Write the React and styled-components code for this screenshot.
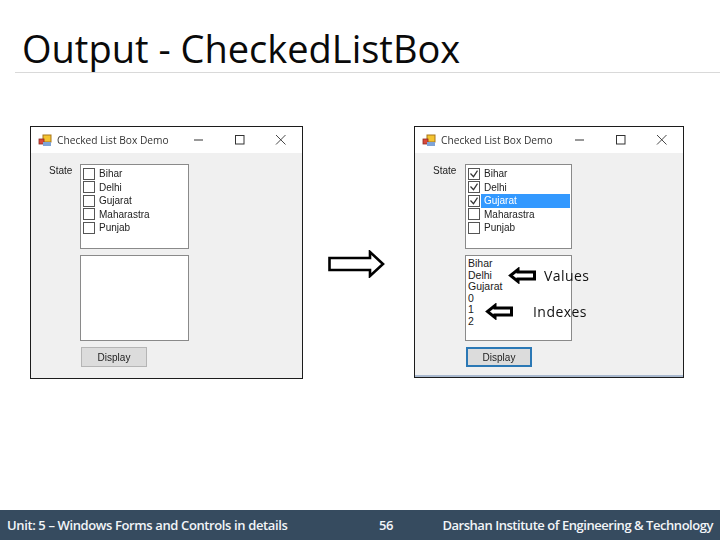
import React from "react";
import styled, { createGlobalStyle } from "styled-components";

const Global = createGlobalStyle`
  html, body { margin: 0; padding: 0; background: #fff; }
  #root { width: 720px; height: 540px; }
`;

const Slide = styled.div`
  width: 720px;
  height: 540px;
  display: flex;
  flex-direction: column;
  overflow: hidden;
  background: #fff;
  font-family: "Open Sans", "Liberation Sans", sans-serif;
`;

const Header = styled.header`
  height: 73px;
  flex: none;
  margin-left: 15px;
  box-sizing: border-box;
  border-bottom: 1px solid #d9d9d9;
  padding: 23px 0 0 7px;
`;

const Title = styled.h1`
  margin: 0;
  font-weight: 400;
  font-size: 38px;
  line-height: 50px;
  color: #0a0a0a;
  white-space: nowrap;
`;

const Stage = styled.main`
  flex: 1;
  display: flex;
  align-items: flex-start;
  padding: 53px 0 0 30px;
`;

const Window = styled.section`
  box-sizing: border-box;
  width: ${(p) => p.$width}px;
  height: ${(p) => p.$height}px;
  border: 1px solid #1c1c1c;
  background: #f0f0f0;
  box-shadow: ${(p) => (p.$accent ? "inset 0 -2px 0 #a9b9cf" : "none")};
  display: flex;
  flex-direction: column;
  flex: none;
`;

const TitleBar = styled.div`
  height: 26px;
  flex: none;
  background: #fff;
  display: flex;
  align-items: center;
  padding: 0 1px 0 7px;
  gap: 5px;
  font-size: 10.2px;
  color: #333;
`;

const TitleText = styled.span`
  flex: 1;
  white-space: nowrap;
  filter: blur(0.25px);
`;

const Controls = styled.div`
  display: flex;
  align-items: center;
  color: #333;
`;

const ControlSlot = styled.span`
  width: 41px;
  display: flex;
  justify-content: center;
`;

const Body = styled.div`
  display: grid;
  grid-template-columns: ${(p) => p.$label}px ${(p) => p.$list}px;
  grid-auto-rows: min-content;
  row-gap: 6px;
  padding-top: 11px;
  font-family: "Liberation Sans", Arial, sans-serif;
  font-size: 10px;
  color: #222;
  filter: blur(0.25px);
`;

const StateLabel = styled.div`
  padding: 1px 0 0 18px;
  font-size: 10px;
`;

const ListBox = styled.div`
  position: relative;
  grid-column: 2;
  box-sizing: border-box;
  height: ${(p) => p.$height}px;
  border: 1px solid #8a8a8a;
  background: #fff;
  padding: 2px 0 0 2px;
`;

const Row = styled.div`
  height: 13.5px;
  display: flex;
  align-items: center;
  gap: 4px;
`;

const Check = styled.span`
  box-sizing: border-box;
  width: 12px;
  height: 12px;
  border: 1px solid #555;
  background: #fff;
  flex: none;
  display: flex;
`;

const RowText = styled.span`
  flex: 1;
  height: 100%;
  margin-left: ${(p) => (p.$selected ? "-3px" : "0")};
  margin-right: 1px;
  padding-left: ${(p) => (p.$selected ? "3px" : "0")};
  display: flex;
  align-items: center;
  background: ${(p) => (p.$selected ? "#3399ff" : "transparent")};
  color: ${(p) => (p.$selected ? "#fff" : "#222")};
`;

const PlainLine = styled.div`
  height: 11.6px;
  line-height: 11.6px;
  font-size: 10.5px;
  color: #1a1a1a;
`;

const DisplayButton = styled.button`
  grid-column: 2;
  box-sizing: border-box;
  width: ${(p) => p.$width}px;
  height: 20px;
  margin: 0 0 0 1px;
  padding: 0;
  background: #dcdcdc;
  border: ${(p) => (p.$focused ? "2px solid #2b78b5" : "1px solid #b5b5b5")};
  font: inherit;
  color: #222;
`;

const BigArrow = styled.svg`
  flex: none;
  width: 58px;
  height: 28px;
  margin: 124px 28px 0 25px;
`;

const Annotation = styled.div`
  position: absolute;
  left: ${(p) => p.$x}px;
  top: ${(p) => p.$y}px;
  display: flex;
  align-items: center;
  gap: ${(p) => p.$gap}px;
  font-family: "Open Sans", sans-serif;
  font-size: 14px;
  letter-spacing: 0.45px;
  color: #111;
  white-space: nowrap;
`;

const Footer = styled.footer`
  height: 30px;
  flex: none;
  background: #364b5f;
  color: #f2f5f8;
  display: grid;
  grid-template-columns: 372px 1fr auto;
  align-items: center;
  padding: 0 7px;
  font-size: 13px;
  font-weight: 600;
  letter-spacing: -0.38px;
  white-space: nowrap;
`;

const FooterOrg = styled.span`
  letter-spacing: -0.46px;
`;

const WinIcon = () => (
  <svg width="14" height="13" viewBox="0 0 14 13">
    <rect x="5" y="1" width="8" height="7" fill="#f4c430" stroke="#a8761a" strokeWidth="1" />
    <rect x="1" y="5" width="5" height="5" fill="#d9483b" stroke="#8c2a20" strokeWidth="0.8" />
    <rect x="5" y="8" width="8" height="4" fill="#7fa3d6" />
  </svg>
);

const WindowControls = () => (
  <Controls>
    <ControlSlot>
      <svg width="12" height="12" viewBox="0 0 12 12"><path d="M1 6h9" stroke="#333" strokeWidth="1" /></svg>
    </ControlSlot>
    <ControlSlot>
      <svg width="12" height="12" viewBox="0 0 12 12"><rect x="1.5" y="1.5" width="8.5" height="8.5" fill="none" stroke="#333" strokeWidth="1" /></svg>
    </ControlSlot>
    <ControlSlot>
      <svg width="12" height="12" viewBox="0 0 12 12"><path d="M1 1l9.5 9.5M10.5 1L1 10.5" stroke="#333" strokeWidth="0.9" /></svg>
    </ControlSlot>
  </Controls>
);

const Tick = () => (
  <svg width="10" height="10" viewBox="0 0 10 10"><path d="M1.5 4.5l3 3.2 4-6" fill="none" stroke="#333" strokeWidth="1.2" /></svg>
);

const LeftArrow = ({ width }) => (
  <svg width={width} height="17" viewBox={`0 0 ${width} 17`}>
    <path
      d={`M${width - 1.5} 5H10V2.5L2.5 8.5L10 14.5V12H${width - 1.5}Z`}
      fill="#fff"
      stroke="#000"
      strokeWidth="3"
    />
  </svg>
);

const STATES = ["Bihar", "Delhi", "Gujarat", "Maharastra", "Punjab"];

const Demo = ({ width, height, label, list, btn, accent, checked = [], selected, output, children }) => (
  <Window $width={width} $height={height} $accent={accent}>
    <TitleBar>
      <WinIcon />
      <TitleText>Checked List Box Demo</TitleText>
      <WindowControls />
    </TitleBar>
    <Body $label={label} $list={list}>
      <StateLabel>State</StateLabel>
      <ListBox $height={85}>
        {STATES.map((s, i) => (
          <Row key={s}>
            <Check>{checked.includes(i) && <Tick />}</Check>
            <RowText $selected={selected === i}>{s}</RowText>
          </Row>
        ))}
      </ListBox>
      <ListBox $height={86}>
        {output.map((l) => (
          <PlainLine key={l}>{l}</PlainLine>
        ))}
        {children}
      </ListBox>
      <DisplayButton $width={btn} $focused={accent}>Display</DisplayButton>
    </Body>
  </Window>
);

export default function App() {
  return (
    <Slide>
      <Global />
      <Header>
        <Title>Output - CheckedListBox</Title>
      </Header>
      <Stage>
        <Demo width={273} height={253} label={49} list={109} btn={66} output={[]} />
        <BigArrow viewBox="0 0 58 28">
          <path d="M1.5 8H42V2L55 14L42 26V20H1.5Z" fill="#fff" stroke="#000" strokeWidth="2.6" />
        </BigArrow>
        <Demo
          width={270}
          height={252}
          label={50}
          list={107}
          btn={66}
          accent
          checked={[0, 1, 2]}
          selected={2}
          output={["Bihar", "Delhi", "Gujarat", "0", "1", "2"]}
        >
          <Annotation $x={42} $y={10} $gap={8}>
            <LeftArrow width={28} />
            <span>Values</span>
          </Annotation>
          <Annotation $x={19} $y={46} $gap={20}>
            <LeftArrow width={28} />
            <span>Indexes</span>
          </Annotation>
        </Demo>
      </Stage>
      <Footer>
        <span>Unit: 5 – Windows Forms and Controls in details</span>
        <span>56</span>
        <FooterOrg>Darshan Institute of Engineering &amp; Technology</FooterOrg>
      </Footer>
    </Slide>
  );
}
